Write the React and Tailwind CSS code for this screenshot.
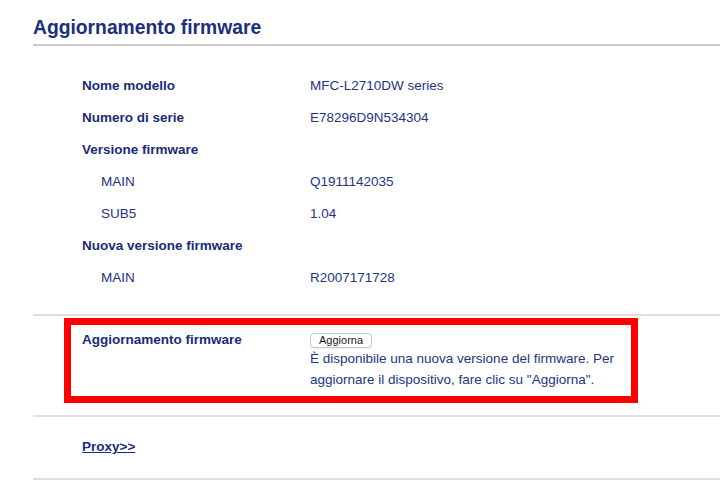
import React from 'react'

// Firmware update page (printer web admin)
const rows = [
  { label: 'Nome modello', value: 'MFC-L2710DW series' },
  { label: 'Numero di serie', value: 'E78296D9N534304' },
  { label: 'Versione firmware' },
  { label: 'MAIN', value: 'Q1911142035', sub: true },
  { label: 'SUB5', value: '1.04', sub: true },
  { label: 'Nuova versione firmware' },
  { label: 'MAIN', value: 'R2007171728', sub: true },
]

function InfoRow({ label, value, sub }) {
  return (
    <div className="flex h-[32px] items-center">
      <div
        className={
          sub
            ? 'w-[228px] pl-[19px] text-[#1f3384]'
            : 'w-[228px] font-bold text-[#1a2b78]'
        }
      >
        {label}
      </div>
      {value && <div className="text-[#22357f]">{value}</div>}
    </div>
  )
}

export default function App() {
  return (
    <div className="h-[503px] w-[720px] overflow-hidden bg-white font-['Liberation_Sans',Arial,sans-serif] text-[13.5px] leading-[16px]">
      <h1 className="ml-[33px] border-b-2 border-[#cdcdcd] pb-[4px] pt-[16px] text-[19.3px] font-bold leading-[24px] text-[#1b2f7c]">
        Aggiornamento firmware
      </h1>

      {/* Device info */}
      <section className="ml-[33px] border-b-2 border-[#dedede] pb-[20px] pl-[49px] pt-[24px]">
        {rows.map((r, i) => (
          <InfoRow key={i} {...r} />
        ))}
      </section>

      {/* Update action (highlighted) */}
      <section className="ml-[33px] border-b-2 border-[#dedede] pb-[12px] pt-[2px]">
        <div className="ml-[31px] flex h-[85px] w-[574px] border-[7px] border-[#ff0000] pl-[11px] pt-[7px]">
          <div className="w-[228px] font-bold text-[#1a2b78]">Aggiornamento firmware</div>
          <div className="flex flex-col items-start">
            <button className="mt-[1px] rounded-[4px] border border-[#c6c6c6] bg-white px-[8px] text-[11px] leading-[13px] text-[#222] shadow-[0_1px_1px_rgba(0,0,0,0.06)]">
              Aggiorna
            </button>
            <p className="leading-[21px] text-[#22357f]">
              È disponibile una nuova versione del firmware. Per
              <br />
              aggiornare il dispositivo, fare clic su "Aggiorna".
            </p>
          </div>
        </div>
      </section>

      <section className="ml-[33px] border-b-2 border-[#dedede] pb-[23px] pl-[49px] pt-[22px]">
        <a href="#" className="font-bold text-[#1a2b84] underline">
          Proxy&gt;&gt;
        </a>
      </section>
    </div>
  )
}
